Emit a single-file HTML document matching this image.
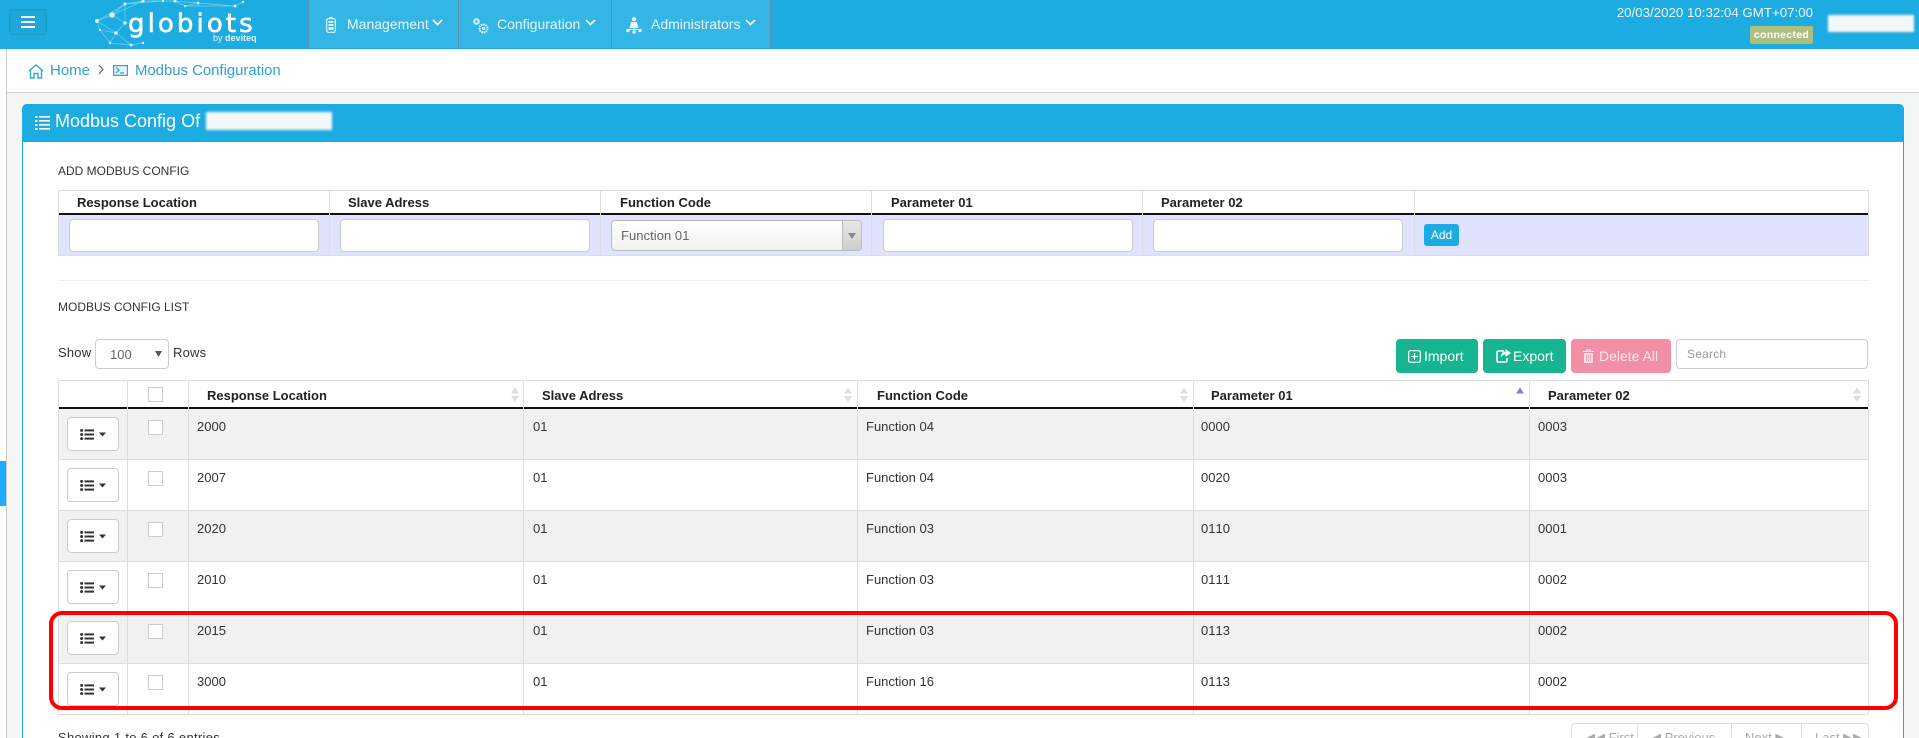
<!DOCTYPE html>
<html lang="en">
<head>
<meta charset="utf-8">
<title>Modbus Configuration</title>
<style>
html,body{margin:0;padding:0;width:1919px;height:738px;overflow:hidden;background:#fff;font-family:"Liberation Sans",Arial,sans-serif;color:#333}
#root{position:absolute;left:0;top:0;width:1919px;height:738px;overflow:hidden;background:#fff}
.a{position:absolute;display:block;box-sizing:border-box}
.t{position:absolute;white-space:nowrap;line-height:20px;height:20px;font-size:13px}
.nav{color:#eaf8fd;font-size:14px}
.h{font-weight:bold;color:#222}
.c{color:#333;font-kerning:none}
.inp{position:absolute;background:#fff;border:1px solid #ccc;border-radius:4px;box-sizing:border-box}
.vl{position:absolute;width:1px;background:#ddd}
.hl{position:absolute;height:1px;background:#ddd;left:58px;width:1811px}
.cb{position:absolute;left:148px;width:15px;height:15px;background:#fff;border:1px solid #ccc;box-sizing:border-box}
.ab{position:absolute;left:67px;width:52px;height:34px;background:#fff;border:1px solid #ccc;border-radius:4px;box-sizing:border-box}
.ab svg{position:absolute;left:12px;top:11px}
.btn{position:absolute;top:339px;height:34px;border-radius:4px;color:#fff;box-sizing:border-box}
svg{position:absolute;display:block;overflow:visible}
</style>
</head>
<body>
<div id="root">
<!-- page bg -->
<div class="a" style="left:7px;top:92px;width:1912px;height:646px;background:#f4f6f6"></div>
<div class="a" style="left:6px;top:49px;width:1px;height:689px;background:#ccc"></div>
<div class="a" style="left:0;top:461px;width:6px;height:45px;background:#1aadff"></div>
<div class="a" style="left:7px;top:92px;width:1912px;height:1px;background:#ccc"></div>

<!-- top bar -->
<div class="a" style="left:0;top:0;width:1919px;height:49px;background:#1cace2"></div>
<div class="a" style="left:9px;top:9px;width:38px;height:26px;background:#1da7da;border:1px solid #1a9ccc;border-radius:4px"></div>
<div class="a" style="left:21px;top:16px;width:14px;height:2px;background:#fff"></div>
<div class="a" style="left:21px;top:21px;width:14px;height:2px;background:#fff"></div>
<div class="a" style="left:21px;top:26px;width:14px;height:2px;background:#fff"></div>

<!-- logo -->
<svg style="left:0;top:0" width="300" height="49" viewBox="0 0 300 49">
<g stroke="#8fd7f2" stroke-width=".7" fill="none" opacity=".8">
<path d="M97 21L112 15L125 4L143 1M97 21L116 33L125 23L112 15M97 21L100 30L116 33L110 43L131 45L143 43M100 30L110 43M116 33L131 45M125 4L125 23M143 1L163 1L175 1L198 3L235 6L243 2M125 4L163 1M175 1L185 6L198 3M185 6L235 6M112 15L143 1M97 21L125 4"/>
</g>
<g fill="#d7f2fb">
<circle cx="97" cy="21" r="2"/><circle cx="112" cy="15" r="2.8"/><circle cx="125" cy="4" r="1.6"/><circle cx="143" cy="1" r="1.5"/><circle cx="116" cy="33" r="1.8"/><circle cx="100" cy="30" r="1.2"/><circle cx="125" cy="23" r="1.8"/><circle cx="175" cy="1" r="1.5"/><circle cx="198" cy="3" r="1.5"/><circle cx="235" cy="6" r="1.5"/><circle cx="185" cy="6" r="1.2"/><circle cx="163" cy="1" r="1.2"/><circle cx="110" cy="43" r="1.2"/><circle cx="131" cy="45" r="1.5"/><circle cx="143" cy="43" r="1.2"/><circle cx="243" cy="2" r="1.2"/>
</g>
</svg>
<div class="t" style="left:128px;top:12px;font-family:'DejaVu Sans',sans-serif;font-size:26px;line-height:24px;height:24px;color:#fff;letter-spacing:3.1px;-webkit-text-stroke:.6px #fff">globiots</div>
<div class="t" style="left:213px;top:33px;font-size:9px;line-height:10px;height:10px;color:#e2f5fc">by <b>deviteq</b></div>

<!-- nav items -->
<div class="a" style="left:308px;top:0;width:463px;height:48px;background:#33b5e5"></div>
<div class="a" style="left:308px;top:0;width:1px;height:48px;background:#5e8cae"></div>
<div class="a" style="left:458px;top:0;width:1px;height:48px;background:#5e8cae"></div>
<div class="a" style="left:611px;top:0;width:1px;height:48px;background:#5e8cae"></div>
<div class="a" style="left:770px;top:0;width:1px;height:48px;background:#5e8cae"></div>

<svg style="left:326px;top:17px" width="10" height="16" viewBox="0 0 10 16"><rect x=".7" y="1.7" width="8.6" height="13.6" rx="1.6" fill="none" stroke="#dff4fb" stroke-width="1.2"/><rect x="3" y="0" width="4" height="1.6" fill="#dff4fb"/><rect x="2.5" y="4" width="5" height="2" fill="#dff4fb"/><rect x="2.5" y="7" width="5" height="2" fill="#dff4fb"/><rect x="2.5" y="10" width="5" height="3" fill="#dff4fb"/></svg>
<div class="t nav" style="left:347px;top:14px">Management</div>
<svg style="left:432px;top:19px" width="11" height="7" viewBox="0 0 11 7"><path d="M1 1L5.5 5.5L10 1" fill="none" stroke="#fff" stroke-width="1.7"/></svg>

<svg style="left:472px;top:17px" width="17" height="17" viewBox="0 0 17 17"><circle cx="4.5" cy="4.5" r="3.4" fill="#c6ecf9"/><circle cx="4.5" cy="4.5" r="1.1" fill="#33b5e5"/><circle cx="11.5" cy="11.5" r="4" fill="none" stroke="#dff4fb" stroke-width="2" stroke-dasharray="1.6 .7"/><circle cx="11.5" cy="11.5" r="1.6" fill="#dff4fb"/></svg>
<div class="t nav" style="left:497px;top:14px">Configuration</div>
<svg style="left:585px;top:19px" width="11" height="7" viewBox="0 0 11 7"><path d="M1 1L5.5 5.5L10 1" fill="none" stroke="#fff" stroke-width="1.7"/></svg>

<svg style="left:626px;top:17px" width="16" height="17" viewBox="0 0 16 17"><circle cx="8" cy="2.2" r="2.2" fill="#eaf8fd"/><path d="M5 5H11L12.5 11H3.5Z" fill="#eaf8fd"/><path d="M2 12.5H14M8 11V15" stroke="#dff4fb" stroke-width="1" fill="none"/><circle cx="2" cy="13.5" r="1.8" fill="#dff4fb"/><circle cx="14" cy="13.5" r="1.8" fill="#dff4fb"/><circle cx="8" cy="15" r="1.8" fill="#dff4fb"/></svg>
<div class="t nav" style="left:651px;top:14px">Administrators</div>
<svg style="left:745px;top:19px" width="11" height="7" viewBox="0 0 11 7"><path d="M1 1L5.5 5.5L10 1" fill="none" stroke="#fff" stroke-width="1.7"/></svg>

<!-- top right -->
<div class="t" style="right:106px;top:3px;font-size:13.3px;color:#eef9fd">20/03/2020 10:32:04 GMT+07:00</div>
<div class="a" style="left:1750px;top:26px;width:63px;height:18px;background:#adbf7e;border-radius:2px;color:#fff;font-size:10.5px;font-weight:bold;text-align:center;line-height:18px;letter-spacing:.3px">connected</div>
<div class="a" style="left:1828px;top:15px;width:86px;height:17px;background:#f3f6f6;filter:blur(1px)"></div>

<!-- breadcrumb -->
<svg style="left:28px;top:64px" width="16" height="15" viewBox="0 0 16 15"><path d="M1 7L8 1L15 7M2.5 6V14H6V9.5H10V14H13.5V6" fill="none" stroke="#2ea5d8" stroke-width="1.4"/></svg>
<div class="t" style="left:50px;top:61px;font-size:15px;color:#2ea0d2">Home</div>
<svg style="left:98px;top:64px" width="6" height="11" viewBox="0 0 6 11"><path d="M1 1L5 5.5L1 10" fill="none" stroke="#666" stroke-width="1.2"/></svg>
<svg style="left:113px;top:65px" width="15" height="11" viewBox="0 0 15 11"><rect x=".6" y=".6" width="13.8" height="9.8" fill="#e3f4fb" stroke="#2ea5d8" stroke-width="1.2"/><path d="M3 2.5L6 5.2L3 8M7 8H11" fill="none" stroke="#2ea5d8" stroke-width="1.2"/></svg>
<div class="t" style="left:135px;top:61px;font-size:14.9px;color:#2ea0d2">Modbus Configuration</div>

<!-- panel -->
<div class="a" style="left:22px;top:104px;width:1882px;height:634px;background:#fff;border-left:1px solid #1cace2;border-right:1px solid #1cace2;border-radius:5px 5px 0 0"></div>
<div class="a" style="left:22px;top:104px;width:1882px;height:38px;background:#1cace2;border-radius:5px 5px 0 0"></div>
<svg style="left:35px;top:116px" width="15" height="14" viewBox="0 0 15 14"><g fill="#fff"><rect x="0" y="0" width="2.4" height="2"/><rect x="4" y="0" width="11" height="1.6"/><rect x="0" y="4" width="2.4" height="2"/><rect x="4" y="4" width="11" height="1.6"/><rect x="0" y="8" width="2.4" height="2"/><rect x="4" y="8" width="11" height="1.6"/><rect x="0" y="12" width="2.4" height="2"/><rect x="4" y="12" width="11" height="1.6"/></g></svg>
<div class="t" style="left:55px;top:111px;font-size:18px;color:#fff">Modbus Config Of</div>
<div class="a" style="left:206px;top:112px;width:126px;height:18px;background:#f4f7f7;filter:blur(1.2px)"></div>

<!-- add section -->
<div class="t" style="left:58px;top:161px;color:#333;font-size:12px">ADD MODBUS CONFIG</div>
<div class="a" style="left:58px;top:190px;width:1811px;height:1px;background:#ddd"></div>
<div class="a" style="left:58px;top:215px;width:1811px;height:41px;background:#e1e2fd;border-bottom:1px solid #dcdcec"></div>
<div class="a" style="left:58px;top:213px;width:1811px;height:2px;background:#111"></div>
<div class="vl" style="left:58px;top:190px;height:66px"></div>
<div class="vl" style="left:329px;top:190px;height:66px"></div>
<div class="vl" style="left:600px;top:190px;height:66px"></div>
<div class="vl" style="left:871px;top:190px;height:66px"></div>
<div class="vl" style="left:1142px;top:190px;height:66px"></div>
<div class="vl" style="left:1414px;top:190px;height:66px"></div>
<div class="vl" style="left:1868px;top:190px;height:66px"></div>
<div class="t h" style="left:77px;top:193px">Response Location</div>
<div class="t h" style="left:348px;top:193px">Slave Adress</div>
<div class="t h" style="left:620px;top:193px">Function Code</div>
<div class="t h" style="left:891px;top:193px">Parameter 01</div>
<div class="t h" style="left:1161px;top:193px">Parameter 02</div>
<div class="inp" style="left:69px;top:219px;width:250px;height:33px"></div>
<div class="inp" style="left:340px;top:219px;width:250px;height:33px"></div>
<div class="inp" style="left:611px;top:220px;width:251px;height:31px;background:linear-gradient(#fff,#f0f0f0);border-color:#bbb"></div>
<div class="a" style="left:842px;top:221px;width:19px;height:29px;background:linear-gradient(#e8e8e8,#cdcdcd);border-left:1px solid #bbb;border-radius:0 3px 3px 0"></div>
<svg style="left:848px;top:233px" width="8" height="6" viewBox="0 0 8 6"><path d="M0 0H8L4 6Z" fill="#888"/></svg>
<div class="t" style="left:621px;top:226px;color:#666;letter-spacing:.05px">Function 01</div>
<div class="inp" style="left:883px;top:219px;width:250px;height:33px"></div>
<div class="inp" style="left:1153px;top:219px;width:250px;height:33px"></div>
<div class="a" style="left:1424px;top:224px;width:35px;height:22px;background:#1cace2;border-radius:3px;color:#fff;font-size:12px;text-align:center;line-height:22px">Add</div>

<div class="a" style="left:58px;top:280px;width:1811px;height:1px;background:#eee"></div>
<div class="t" style="left:58px;top:297px;color:#333;font-size:12px">MODBUS CONFIG LIST</div>

<div class="t" style="left:58px;top:343px;letter-spacing:.2px">Show</div>
<div class="inp" style="left:95px;top:339px;width:74px;height:30px"></div>
<div class="t" style="left:110px;top:345px;color:#666">100</div>
<svg style="left:155px;top:351px" width="7" height="6" viewBox="0 0 7 6"><path d="M0 0H7L3.5 6Z" fill="#555"/></svg>
<div class="t" style="left:173px;top:343px;letter-spacing:.2px">Rows</div>

<!-- toolbar buttons -->
<div class="btn" style="left:1396px;width:82px;background:#16b590"></div>
<svg style="left:1408px;top:350px" width="13" height="13" viewBox="0 0 13 13"><rect x=".7" y=".7" width="11.6" height="11.6" rx="1.5" fill="none" stroke="#fff" stroke-width="1.2"/><path d="M6.5 3V10M3 6.5H10" stroke="#fff" stroke-width="1.2"/></svg>
<div class="t" style="left:1424px;top:346px;font-size:14px;color:#fff">Import</div>
<div class="btn" style="left:1483px;width:83px;background:#16b590"></div>
<svg style="left:1496px;top:349px" width="15" height="14" viewBox="0 0 15 14"><path d="M8 2H2.5Q1 2 1 3.5V11.5Q1 13 2.5 13H9.5Q11 13 11 11.5V9" fill="none" stroke="#fff" stroke-width="1.6"/><path d="M9.5 0L15 4L9.5 8V5.5Q6 5.5 5 9Q4.5 3 9.5 2.5Z" fill="#fff"/></svg>
<div class="t" style="left:1513px;top:346px;font-size:14px;color:#fff">Export</div>
<div class="btn" style="left:1571px;width:100px;background:#f28fa6"></div>
<svg style="left:1583px;top:349px" width="11" height="14" viewBox="0 0 11 14"><path d="M0 2.5H11M3.5 2.5V.8H7.5V2.5" stroke="#fde3e9" stroke-width="1.1" fill="none"/><path d="M1 4H10V14H1Z" fill="#fde3e9"/><path d="M3.5 6V12M5.5 6V12M7.5 6V12" stroke="#f28fa6" stroke-width=".8"/></svg>
<div class="t" style="left:1599px;top:346px;font-size:14px;color:#fde8ed">Delete All</div>
<div class="inp" style="left:1676px;top:339px;width:192px;height:30px"></div>
<div class="t" style="left:1687px;top:344px;font-size:12px;color:#999;letter-spacing:.2px">Search</div>

<!-- list table -->
<div class="a" style="left:58px;top:408px;width:1811px;height:51px;background:#f1f1f1"></div>
<div class="a" style="left:58px;top:511px;width:1811px;height:50px;background:#f1f1f1"></div>
<div class="a" style="left:58px;top:613px;width:1811px;height:50px;background:#f1f1f1"></div>
<div class="hl" style="top:380px"></div>
<div class="a" style="left:58px;top:407px;width:1811px;height:2px;background:#111"></div>
<div class="hl" style="top:459px"></div>
<div class="hl" style="top:510px"></div>
<div class="hl" style="top:561px"></div>
<div class="hl" style="top:612px"></div>
<div class="hl" style="top:663px"></div>
<div class="hl" style="top:714px"></div>
<div class="vl" style="left:58px;top:380px;height:335px"></div>
<div class="vl" style="left:127px;top:380px;height:335px"></div>
<div class="vl" style="left:188px;top:380px;height:335px"></div>
<div class="vl" style="left:523px;top:380px;height:335px"></div>
<div class="vl" style="left:857px;top:380px;height:335px"></div>
<div class="vl" style="left:1193px;top:380px;height:335px"></div>
<div class="vl" style="left:1529px;top:380px;height:335px"></div>
<div class="vl" style="left:1868px;top:380px;height:335px"></div>

<div class="cb" style="top:387px"></div>
<div class="t h" style="left:207px;top:386px">Response Location</div>
<div class="t h" style="left:542px;top:386px">Slave Adress</div>
<div class="t h" style="left:877px;top:386px">Function Code</div>
<div class="t h" style="left:1211px;top:386px">Parameter 01</div>
<div class="t h" style="left:1548px;top:386px">Parameter 02</div>

<svg style="left:509px;top:387px" width="12" height="16" viewBox="0 0 12 16"><path d="M2 6.5L6 .5L10 6.5ZM2 9L6 15L10 9Z" fill="#ddd"/></svg>
<svg style="left:842px;top:387px" width="12" height="16" viewBox="0 0 12 16"><path d="M2 6.5L6 .5L10 6.5ZM2 9L6 15L10 9Z" fill="#ddd"/></svg>
<svg style="left:1178px;top:387px" width="12" height="16" viewBox="0 0 12 16"><path d="M2 6.5L6 .5L10 6.5ZM2 9L6 15L10 9Z" fill="#ddd"/></svg>
<svg style="left:1514px;top:387px" width="12" height="16" viewBox="0 0 12 16"><path d="M2 6.5L6 .5L10 6.5Z" fill="#7d7fd8"/></svg>
<svg style="left:1851px;top:387px" width="12" height="16" viewBox="0 0 12 16"><path d="M2 6.5L6 .5L10 6.5ZM2 9L6 15L10 9Z" fill="#ddd"/></svg>

<svg width="0" height="0" style="left:0;top:0"><symbol id="m" viewBox="0 0 27 11"><g fill="#333"><circle cx="1.6" cy="1.4" r="1.5"/><circle cx="1.6" cy="5.5" r="1.5"/><circle cx="1.6" cy="9.6" r="1.5"/><rect x="4.5" y=".4" width="9.5" height="2"/><rect x="4.5" y="4.5" width="9.5" height="2"/><rect x="4.5" y="8.6" width="9.5" height="2"/><path d="M19 3.5H26L22.5 7.5Z"/></g></symbol></svg>

<!-- row 1 -->
<div class="ab" style="top:417px"><svg width="27" height="11"><use href="#m"/></svg></div>
<div class="cb" style="top:420px"></div>
<div class="t c" style="left:197px;top:417px">2000</div><div class="t c" style="left:533px;top:417px">01</div><div class="t c" style="left:866px;top:417px">Function 04</div><div class="t c" style="left:1201px;top:417px">0000</div><div class="t c" style="left:1538px;top:417px">0003</div>
<!-- row 2 -->
<div class="ab" style="top:468px"><svg width="27" height="11"><use href="#m"/></svg></div>
<div class="cb" style="top:471px"></div>
<div class="t c" style="left:197px;top:468px">2007</div><div class="t c" style="left:533px;top:468px">01</div><div class="t c" style="left:866px;top:468px">Function 04</div><div class="t c" style="left:1201px;top:468px">0020</div><div class="t c" style="left:1538px;top:468px">0003</div>
<!-- row 3 -->
<div class="ab" style="top:519px"><svg width="27" height="11"><use href="#m"/></svg></div>
<div class="cb" style="top:522px"></div>
<div class="t c" style="left:197px;top:519px">2020</div><div class="t c" style="left:533px;top:519px">01</div><div class="t c" style="left:866px;top:519px">Function 03</div><div class="t c" style="left:1201px;top:519px">0110</div><div class="t c" style="left:1538px;top:519px">0001</div>
<!-- row 4 -->
<div class="ab" style="top:570px"><svg width="27" height="11"><use href="#m"/></svg></div>
<div class="cb" style="top:573px"></div>
<div class="t c" style="left:197px;top:570px">2010</div><div class="t c" style="left:533px;top:570px">01</div><div class="t c" style="left:866px;top:570px">Function 03</div><div class="t c" style="left:1201px;top:570px">0111</div><div class="t c" style="left:1538px;top:570px">0002</div>
<!-- row 5 -->
<div class="ab" style="top:621px"><svg width="27" height="11"><use href="#m"/></svg></div>
<div class="cb" style="top:624px"></div>
<div class="t c" style="left:197px;top:621px">2015</div><div class="t c" style="left:533px;top:621px">01</div><div class="t c" style="left:866px;top:621px">Function 03</div><div class="t c" style="left:1201px;top:621px">0113</div><div class="t c" style="left:1538px;top:621px">0002</div>
<!-- row 6 -->
<div class="ab" style="top:672px"><svg width="27" height="11"><use href="#m"/></svg></div>
<div class="cb" style="top:675px"></div>
<div class="t c" style="left:197px;top:672px">3000</div><div class="t c" style="left:533px;top:672px">01</div><div class="t c" style="left:866px;top:672px">Function 16</div><div class="t c" style="left:1201px;top:672px">0113</div><div class="t c" style="left:1538px;top:672px">0002</div>

<!-- footer -->
<div class="t" style="left:58px;top:728px;letter-spacing:.3px">Showing 1 to 6 of 6 entries</div>
<div class="a" style="left:1571px;top:723px;width:298px;height:30px;border:1px solid #ddd;border-radius:4px;background:#fff"></div>
<div class="vl" style="left:1637px;top:723px;height:20px"></div>
<div class="vl" style="left:1731px;top:723px;height:20px"></div>
<div class="vl" style="left:1801px;top:723px;height:20px"></div>
<div class="t" style="left:1585px;top:728px;color:#aaa">◀◀ First</div>
<div class="t" style="left:1651px;top:728px;color:#aaa">◀ Previous</div>
<div class="t" style="left:1745px;top:728px;color:#aaa">Next ▶</div>
<div class="t" style="left:1815px;top:728px;color:#aaa">Last ▶▶</div>

<!-- red annotation -->
<div class="a" style="left:49px;top:611px;width:1849px;height:99px;border:4.5px solid #ff0000;border-radius:13px"></div>
</div>
</body>
</html>
